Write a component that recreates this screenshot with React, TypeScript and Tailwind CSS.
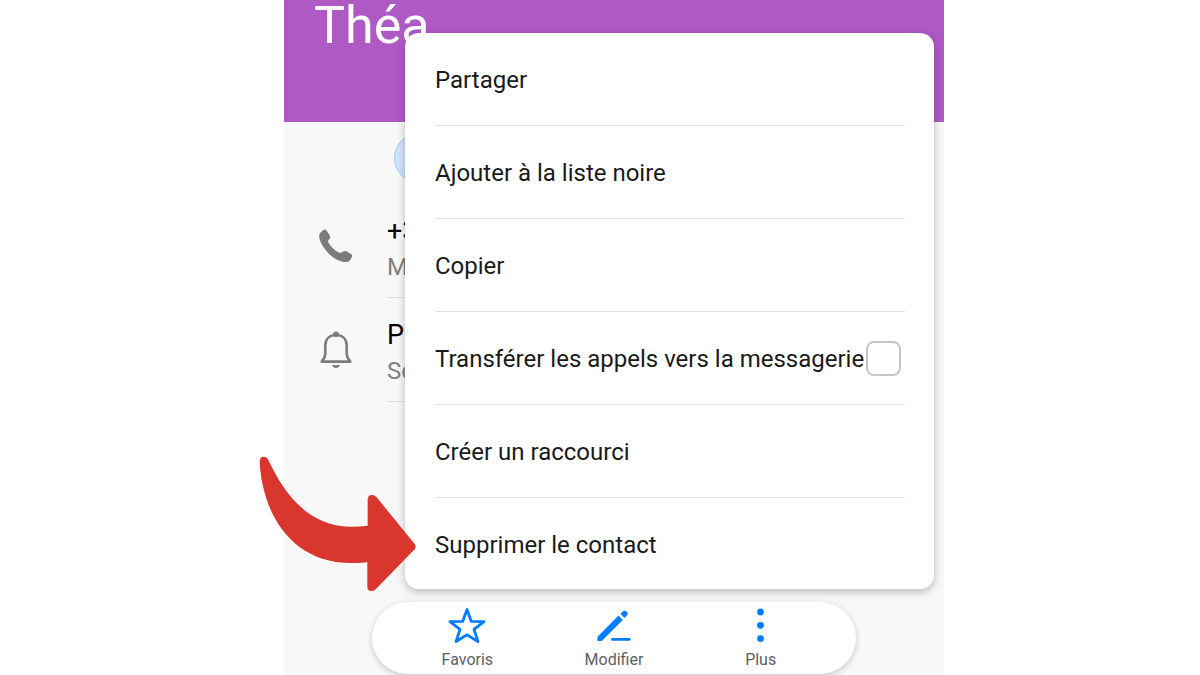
import React, { useState } from 'react'

const PhoneIcon = () => (
  <svg className="w-[34px] h-[34px] text-[#7c7c7c]" viewBox="0 0 102 102" fill="currentColor">
    <path d="M4 11 L13 3 Q19 -1 23 5 L32 19 Q35 25 32 29 L28 34 Q26 37 29 42 Q40 60 58 70 Q64 73 69 70 L74 67 Q78 65 82 67 L96 75 Q101 79 99 84 L93 94 Q90 99 84 99 C64 100 42 89 24 68 C8 50 -1 32 1 18 Q1 14 4 11 Z" />
  </svg>
)

const BellIcon = () => (
  <svg className="w-8 h-[38px] text-[#7c7c7c]" viewBox="0 0 32 38" fill="currentColor">
    <circle cx="16" cy="3.2" r="2.8" />
    <path
      d="M5.3 23 V14.5 C5.3 7.5 10 4 16 4 C22 4 26.7 7.5 26.7 14.5 V23 C26.7 26.5 28.2 28 30.3 30.6 H1.7 C3.8 28 5.3 26.5 5.3 23 Z"
      fill="none"
      stroke="currentColor"
      strokeWidth="2.6"
      strokeLinejoin="round"
    />
    <path d="M12 34 H20 C19.3 36 17.8 37 16 37 C14.2 37 12.7 36 12 34 Z" />
  </svg>
)

const StarIcon = () => (
  <svg className="w-10 h-10" viewBox="0 0 40 40" fill="none" stroke="#007dfe" strokeWidth="2.8" strokeLinejoin="round">
    <path d="M20 3.5 L24.3 15.4 L37 15.6 L27 23.4 L31 35.6 L20 28.8 L9 35.6 L13 23.4 L3 15.6 L15.7 15.4 Z" />
  </svg>
)

const EditIcon = () => (
  <svg className="w-10 h-10" viewBox="0 0 40 40" fill="#007dfe">
    <path d="M24.5 9.6 L28.8 13.9 L8.2 34.5 Q7.6 35.1 6.8 35.1 H4.4 Q3.4 35.1 3.4 34.1 V31.7 Q3.4 30.8 4 30.2 Z" />
    <path d="M26.4 7.8 L29.3 4.9 Q30.5 4 31.7 4.9 L33.3 6.6 Q34.3 7.8 33.3 9.1 L30.5 12 Z" />
    <rect x="17" y="32" width="19.6" height="2.8" rx="1.4" />
  </svg>
)

const MoreIcon = () => (
  <svg className="w-10 h-10" viewBox="0 0 40 40" fill="#007dfe">
    <circle cx="19.5" cy="6" r="3.4" />
    <circle cx="19.5" cy="19.3" r="3.4" />
    <circle cx="19.5" cy="32.6" r="3.4" />
  </svg>
)

const details = [
  { icon: <PhoneIcon />, title: '+3', subtitle: 'M' },
  { icon: <BellIcon />, title: 'P', subtitle: 'So' }
]

const actions = [
  { icon: <StarIcon />, label: 'Favoris' },
  { icon: <EditIcon />, label: 'Modifier' },
  { icon: <MoreIcon />, label: 'Plus' }
]

const menuItems = ['Partager', 'Ajouter à la liste noire', 'Copier', 'Transférer les appels vers la messagerie', 'Créer un raccourci', 'Supprimer le contact']

const rowClass = 'flex w-full h-[93px] items-center justify-between text-left whitespace-nowrap'

const ContextMenu = () => {
  const [toVoicemail, setToVoicemail] = useState(false)

  return (
    <ul className="absolute top-[33px] left-[121px] right-[10px] rounded-[14px] bg-white pr-[29px] pl-[30px] text-2xl text-[#1a1a1a] shadow-[0_3px_8px_rgba(0,0,0,0.25)]">
      {menuItems.map((item) => (
        <li key={item} className="h-[93px] border-b border-[#e2e2e2] last:h-[91px] last:border-b-0">
          {item.startsWith('Transférer') ? (
            <label className={rowClass}>
              {item}
              <input
                type="checkbox"
                checked={toVoicemail}
                onChange={(e) => setToVoicemail(e.target.checked)}
                className="mr-1 size-[35px] shrink-0 appearance-none rounded-lg border-2 border-[#c6c6c6] bg-white checked:bg-[#007dfe]"
              />
            </label>
          ) : (
            <button type="button" className={rowClass}>{item}</button>
          )}
        </li>
      ))}
    </ul>
  )
}

const App = () => {
  return (
    <main className="flex min-h-screen justify-center overflow-hidden bg-white pl-7 font-['Roboto',sans-serif]">
      <div className="relative flex w-full max-w-[660px] flex-col bg-[#f8f8f8]">
        <header className="h-[122px] bg-[#af59c5] pt-0.5 pl-[30px]">
          <h1 className="text-[52px]/[48px] text-white">Théa</h1>
        </header>

        {/* Pastille du compte */}
        <div className="mt-[11px] ml-[110px] size-[50px] rounded-full border border-[#9ccbf5] bg-[#d0e4fb]"></div>

        <ul className="mt-[11px] pr-[30px]">
          {details.map((detail) => (
            <li key={detail.title} className="flex h-[104px] items-center">
              <div className="flex w-[103px] justify-center">{detail.icon}</div>
              <div className="flex h-full flex-1 flex-col justify-center border-b border-[#dcdcdc] pt-1.5">
                <p className="text-[27px]/9 text-black">{detail.title}</p>
                <p className="text-2xl/9 text-[#808080]">{detail.subtitle}</p>
              </div>
            </li>
          ))}
        </ul>

        {/* Barre d'actions */}
        <nav className="mx-auto mt-auto mb-px grid h-[72px] w-full max-w-[484px] grid-cols-3 rounded-full bg-white px-[22px] shadow-[0_2px_6px_rgba(0,0,0,0.2)]">
          {actions.map((action) => (
            <button key={action.label} type="button" className="flex flex-col items-center gap-0.5 pt-1 text-base text-[#606060]">
              {action.icon}
              <span>{action.label}</span>
            </button>
          ))}
        </nav>

        <ContextMenu />

        {/* Flèche vers "Supprimer le contact" */}
        <svg className="absolute top-[456px] -left-[25px] w-[158px] h-[136px]" viewBox="57 48 474 408" fill="#d9362e">
          <path d="M59 66 Q59 50 71 50 Q81 50 85 60 C125 145 195 258 330 260 Q360 260 383 257 V180 Q383 165 396 165 Q404 165 410 172 L524 312 Q530 320 524 328 L408 447 Q402 454 395 453 Q382 453 382 441 V367 Q360 370 338 369 C145 371 66 208 59 66 Z" />
        </svg>
      </div>
    </main>
  )
}

export default App
